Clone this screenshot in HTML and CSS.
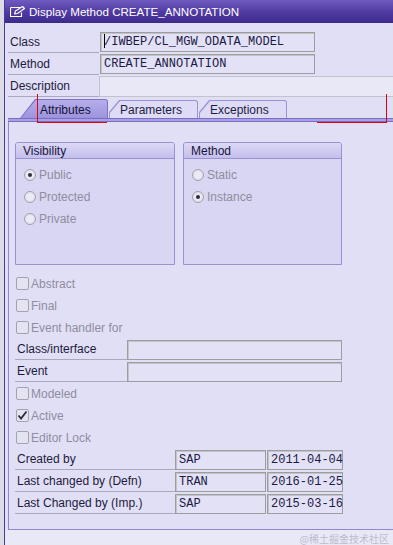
FILE: index.html
```html
<!DOCTYPE html>
<html lang="en">
<head>
    <meta charset="UTF-8">
    <meta name="viewport" content="width=device-width, initial-scale=1.0">
    <title>Display Method CREATE_ANNOTATION</title>
    <link rel="stylesheet" href="styles.css">
</head>
<body>
    <div class="window">
        <div class="titlebar">
            <svg class="title-icon" width="15" height="12" viewBox="0 0 15 12">
                <path d="M0.5 1.5 H10 M0.5 1.5 V10.5 H11.5 V6.5" fill="none" stroke="#ffffff" stroke-width="1.2"/>
                <path d="M4.5 8 L5.5 5 L12.5 0.5 L14.5 2.5 L7.5 7.5 Z" fill="none" stroke="#ffffff" stroke-width="1.1" stroke-linejoin="round"/>
            </svg>
            <span>Display Method CREATE_ANNOTATION</span>
        </div>

        <div class="main">
            <div class="head">
                <div class="row">
                    <div class="lbl">Class</div>
                    <div class="fld fld-class"><span class="cursor"></span>/IWBEP/CL_MGW_ODATA_MODEL</div>
                </div>
                <div class="row">
                    <div class="lbl">Method</div>
                    <div class="fld fld-class">CREATE_ANNOTATION</div>
                </div>
                <div class="row">
                    <div class="lbl">Description</div>
                    <div class="fld fld-desc"></div>
                </div>
            </div>

            <div class="tabs">
                <div class="tab tab-active"><span class="tab-in">Attributes</span></div>
                <div class="tab tab-param"><span class="tab-in">Parameters</span></div>
                <div class="tab"><span class="tab-in">Exceptions</span></div>
            </div>
            <div class="tabline"></div>

            <div class="panel">
                <div class="groups">
                    <div class="group">
                        <div class="group-head">Visibility</div>
                        <div class="group-body">
                            <div class="opt"><span class="radio checked"></span>Public</div>
                            <div class="opt"><span class="radio"></span>Protected</div>
                            <div class="opt"><span class="radio"></span>Private</div>
                        </div>
                    </div>
                    <div class="group group-method">
                        <div class="group-head">Method</div>
                        <div class="group-body">
                            <div class="opt"><span class="radio"></span>Static</div>
                            <div class="opt"><span class="radio checked"></span>Instance</div>
                        </div>
                    </div>
                </div>

                <div class="list">
                    <div class="chk"><span class="box"></span>Abstract</div>
                    <div class="chk"><span class="box"></span>Final</div>
                    <div class="chk"><span class="box"></span>Event handler for</div>
                    <div class="row">
                        <div class="lbl lbl-mid">Class/interface</div>
                        <div class="fld fld-wide"></div>
                    </div>
                    <div class="row">
                        <div class="lbl lbl-mid">Event</div>
                        <div class="fld fld-wide"></div>
                    </div>
                    <div class="chk"><span class="box"></span>Modeled</div>
                    <div class="chk">
                        <span class="box">
                            <svg width="11" height="11" viewBox="0 0 11 11"><path d="M1.5 5.5 L4 8.5 L9.5 1.5" fill="none" stroke="#2a2a3a" stroke-width="1.8"/></svg>
                        </span>Active
                    </div>
                    <div class="chk"><span class="box"></span>Editor Lock</div>
                    <div class="row">
                        <div class="lbl lbl-long">Created by</div>
                        <div class="fld fld-user">SAP</div>
                        <div class="fld fld-date">2011-04-04</div>
                    </div>
                    <div class="row">
                        <div class="lbl lbl-long">Last changed by (Defn)</div>
                        <div class="fld fld-user">TRAN</div>
                        <div class="fld fld-date">2016-01-25</div>
                    </div>
                    <div class="row">
                        <div class="lbl lbl-long">Last Changed by (Imp.)</div>
                        <div class="fld fld-user">SAP</div>
                        <div class="fld fld-date">2015-03-16</div>
                    </div>
                </div>
            </div>
        </div>

        <div class="foot">@稀土掘金技术社区</div>
    </div>

    <!-- red annotation marks -->
    <div class="mark mark-v1"></div>
    <div class="mark mark-h1"></div>
    <div class="mark mark-h2"></div>
    <div class="mark mark-v2"></div>
</body>
</html>
```

FILE: styles.css
```css
body {
    margin: 0;
    background-color: #dcdbe7;
    font-family: "Liberation Sans", Arial, sans-serif;
    font-size: 12px;
    color: #1c1b3c;
}

.window {
    margin-left: 4px;
    border-left: 1px solid #4a3c98;
    background-color: #e1dff6;
    height: 545px;
    overflow: hidden;
}

.titlebar {
    display: flex;
    align-items: center;
    gap: 4px;
    height: 23px;
    padding-left: 5px;
    background: linear-gradient(#6f5bbf, #4f39a1 55%, #3e2a8b);
    color: #ffffff;
    font-size: 11.6px;
}

.title-icon {
    display: block;
}

.main {
    padding-left: 3px;
}

.head {
    padding-top: 8px;
}

.row {
    display: flex;
    height: 22px;
}

.lbl {
    width: 91px;
    height: 22px;
    box-sizing: border-box;
    border-bottom: 1px solid #a9a8bc;
    padding: 1px 0 0 2px;
    line-height: 21px;
    white-space: nowrap;
}

.fld {
    height: 20px;
    box-sizing: border-box;
    margin: 1px 0 0 1px;
    padding: 1px 0 0 3px;
    border: 1px solid #9d9d9f;
    box-shadow: inset 1px 1px 0 #c4c4c8;
    background-color: #e3e1f5;
    font-family: "Liberation Mono", "Courier New", monospace;
    font-size: 12px;
    line-height: 17px;
    color: #1b1a46;
    white-space: nowrap;
}

.fld-class {
    width: 215px;
}

.cursor {
    display: inline-block;
    width: 1px;
    height: 14px;
    margin-right: -1px;
    vertical-align: -3px;
    background-color: #000000;
}

.fld-desc {
    flex: 1;
    height: 21px;
    margin-left: 0;
    border-color: #c2c1cc;
    border-right: none;
    box-shadow: none;
    background-color: #e9e8f7;
}

/* tabs */
.tabs {
    display: flex;
    align-items: flex-end;
    height: 21px;
    padding-left: 12px;
}

.tab {
    width: 88px;
    height: 18px;
    box-sizing: border-box;
    margin-left: 1px;
    padding: 1px 1px 0 1px;
    background-color: #9b92d6;
    border-radius: 0 3px 0 0;
    clip-path: polygon(10px 0, 100% 0, 100% 100%, 0 100%, 0 12px);
}

.tab-in {
    display: block;
    height: 100%;
    box-sizing: border-box;
    padding: 1px 0 0 10px;
    border-radius: 0 2px 0 0;
    background-color: #dedbf6;
    clip-path: polygon(10px 0, 100% 0, 100% 100%, 0 100%, 0 12px);
    line-height: 17px;
    color: #1e1d3e;
}

.tab-param {
    width: 89px;
}

.tab-active {
    height: 19px;
    margin-left: 0;
    background-color: #7d72c4;
    clip-path: polygon(15px 0, 100% 0, 100% 100%, 0 100%);
}

.tab-active .tab-in {
    padding: 1px 0 0 19px;
    background: linear-gradient(#b6aeea, #9d93dd);
    clip-path: polygon(15px 0, 100% 0, 100% 100%, 0 100%);
    line-height: 18px;
    color: #15143a;
}

.tabline {
    height: 4px;
    box-sizing: border-box;
    border-top: 1px solid #786dc2;
    border-bottom: 1px solid #786dc2;
    background-color: #aaa1e2;
}

/* tab content */
.panel {
    padding: 20px 0 15px 6px;
    border-left: 1px solid #9188cf;
    border-bottom: 1px solid #9188cf;
}

.groups {
    display: flex;
    gap: 8px;
}

.group {
    width: 160px;
    height: 123px;
    box-sizing: border-box;
    border: 1px solid #9a91d2;
    border-radius: 3px 3px 0 0;
    background-color: #d9d6f3;
}

.group-method {
    width: 159px;
}

.group-head {
    height: 16px;
    box-sizing: border-box;
    padding: 1px 0 0 7px;
    border-bottom: 1px solid #9a91d2;
    border-radius: 2px 2px 0 0;
    background: linear-gradient(#dcd8f6, #c4bfec);
    line-height: 14px;
    color: #17163a;
}

.group-body {
    padding-top: 5px;
}

.opt {
    display: flex;
    align-items: center;
    height: 22px;
    padding-left: 8px;
    color: #8e8d9f;
}

.radio {
    position: relative;
    width: 12px;
    height: 12px;
    box-sizing: border-box;
    margin-right: 3px;
    border: 1px solid #a3a2ad;
    border-radius: 50%;
    background: radial-gradient(circle, #ecebf5 40%, #d4d3e0);
}

.radio.checked::after {
    content: "";
    position: absolute;
    left: 3px;
    top: 3px;
    width: 4px;
    height: 4px;
    border-radius: 50%;
    background-color: #2f2e3e;
}

.list {
    margin-top: 7px;
}

.chk {
    display: flex;
    align-items: center;
    height: 22px;
    padding: 1px 0 0 1px;
    box-sizing: border-box;
    color: #8e8d9f;
}

.box {
    display: flex;
    align-items: center;
    justify-content: center;
    width: 13px;
    height: 13px;
    box-sizing: border-box;
    margin-right: 2px;
    border: 1px solid #a3a2ad;
    border-radius: 2px;
    background-color: #e4e3f2;
}

.lbl-mid {
    width: 112px;
}

.lbl-long {
    width: 160px;
}

.list .fld {
    margin: 2px 0 0 0;
}

.fld-wide {
    width: 215px;
}

.fld-user {
    width: 91px;
}

.list .fld-date {
    width: 76px;
    margin-left: 1px;
}

.foot {
    padding: 2px 4px 0 0;
    background-color: #e9e8f7;
    height: 15px;
    text-align: right;
    font-family: "Noto Sans CJK SC", sans-serif;
    font-size: 10px;
    line-height: 13px;
    color: #bcbbcb;
}

.mark {
    position: absolute;
    background-color: #e0000f;
}

.mark-v1 {
    left: 37px;
    top: 94px;
    width: 1px;
    height: 29px;
}

.mark-h1 {
    left: 37px;
    top: 122px;
    width: 70px;
    height: 1px;
}

.mark-h2 {
    left: 317px;
    top: 122px;
    width: 70px;
    height: 1px;
}

.mark-v2 {
    left: 386px;
    top: 94px;
    width: 1px;
    height: 29px;
}
```
